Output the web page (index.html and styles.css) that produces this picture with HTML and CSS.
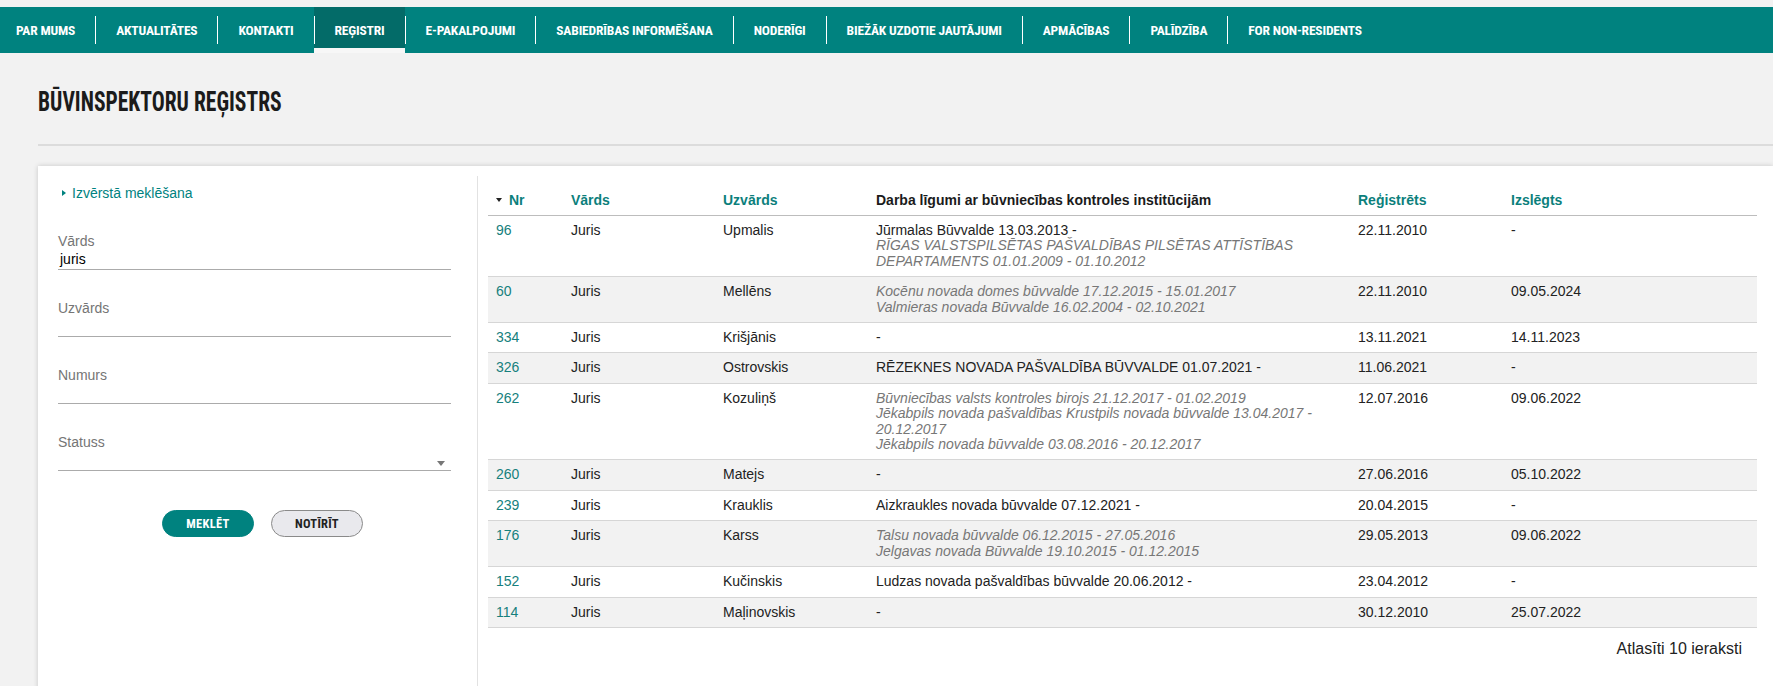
FILE: index.html
```html
<!DOCTYPE html>
<html lang="lv">
<head>
<meta charset="utf-8">
<title>Būvinspektoru reģistrs</title>
<link rel="stylesheet" href="styles.css">
</head>
<body>
<div class="topstrip"></div>
<nav class="mainnav">
  <ul class="navlist">
    <li class="navitem first"><a href="#">Par mums</a></li>
    <li class="navitem"><a href="#">Aktualitātes</a></li>
    <li class="navitem"><a href="#">Kontakti</a></li>
    <li class="navitem active"><a href="#">Reģistri</a></li>
    <li class="navitem"><a href="#">E-pakalpojumi</a></li>
    <li class="navitem"><a href="#">Sabiedrības informēšana</a></li>
    <li class="navitem"><a href="#">Noderīgi</a></li>
    <li class="navitem"><a href="#">Biežāk uzdotie jautājumi</a></li>
    <li class="navitem"><a href="#">Apmācības</a></li>
    <li class="navitem"><a href="#">Palīdzība</a></li>
    <li class="navitem"><a href="#">For non-residents</a></li>
  </ul>
</nav>

<main class="content">
  <h1 class="pagetitle">Būvinspektoru reģistrs</h1>
  <div class="rule"></div>

  <div class="card">
    <aside class="filters">
      <a class="advanced" href="#"><span class="tri-right"></span>Izvērstā meklēšana</a>

      <div class="field">
        <label class="flabel">Vārds</label>
        <div class="finput">juris</div>
      </div>
      <div class="field">
        <label class="flabel">Uzvārds</label>
        <div class="finput"></div>
      </div>
      <div class="field">
        <label class="flabel">Numurs</label>
        <div class="finput"></div>
      </div>
      <div class="field">
        <label class="flabel">Statuss</label>
        <div class="finput select"><span class="dd-arrow"></span></div>
      </div>

      <div class="buttons">
        <button class="btn primary">Meklēt</button>
        <button class="btn secondary">Notīrīt</button>
      </div>
    </aside>

    <section class="results">
      <table class="grid">
        <colgroup>
          <col class="c-nr"><col class="c-name"><col class="c-surname"><col class="c-contracts"><col class="c-reg"><col class="c-excl">
        </colgroup>
        <thead>
          <tr>
            <th class="sort"><span class="tri-down"></span>Nr</th>
            <th class="sort">Vārds</th>
            <th class="sort">Uzvārds</th>
            <th>Darba līgumi ar būvniecības kontroles institūcijām</th>
            <th class="sort">Reģistrēts</th>
            <th class="sort">Izslēgts</th>
          </tr>
        </thead>
        <tbody>
          <tr>
            <td class="nr">96</td><td>Juris</td><td>Upmalis</td>
            <td><div>Jūrmalas Būvvalde 13.03.2013 -</div><div class="past">RĪGAS VALSTSPILSĒTAS PAŠVALDĪBAS PILSĒTAS ATTĪSTĪBAS DEPARTAMENTS 01.01.2009 - 01.10.2012</div></td>
            <td>22.11.2010</td><td>-</td>
          </tr>
          <tr>
            <td class="nr">60</td><td>Juris</td><td>Mellēns</td>
            <td><div class="past">Kocēnu novada domes būvvalde 17.12.2015 - 15.01.2017</div><div class="past">Valmieras novada Būvvalde 16.02.2004 - 02.10.2021</div></td>
            <td>22.11.2010</td><td>09.05.2024</td>
          </tr>
          <tr>
            <td class="nr">334</td><td>Juris</td><td>Krišjānis</td>
            <td>-</td>
            <td>13.11.2021</td><td>14.11.2023</td>
          </tr>
          <tr>
            <td class="nr">326</td><td>Juris</td><td>Ostrovskis</td>
            <td>RĒZEKNES NOVADA PAŠVALDĪBA BŪVVALDE 01.07.2021 -</td>
            <td>11.06.2021</td><td>-</td>
          </tr>
          <tr>
            <td class="nr">262</td><td>Juris</td><td>Kozuliņš</td>
            <td><div class="past">Būvniecības valsts kontroles birojs 21.12.2017 - 01.02.2019</div><div class="past">Jēkabpils novada pašvaldības Krustpils novada būvvalde 13.04.2017 - 20.12.2017</div><div class="past">Jēkabpils novada būvvalde 03.08.2016 - 20.12.2017</div></td>
            <td>12.07.2016</td><td>09.06.2022</td>
          </tr>
          <tr>
            <td class="nr">260</td><td>Juris</td><td>Matejs</td>
            <td>-</td>
            <td>27.06.2016</td><td>05.10.2022</td>
          </tr>
          <tr>
            <td class="nr">239</td><td>Juris</td><td>Krauklis</td>
            <td>Aizkraukles novada būvvalde 07.12.2021 -</td>
            <td>20.04.2015</td><td>-</td>
          </tr>
          <tr>
            <td class="nr">176</td><td>Juris</td><td>Karss</td>
            <td><div class="past">Talsu novada būvvalde 06.12.2015 - 27.05.2016</div><div class="past">Jelgavas novada Būvvalde 19.10.2015 - 01.12.2015</div></td>
            <td>29.05.2013</td><td>09.06.2022</td>
          </tr>
          <tr>
            <td class="nr">152</td><td>Juris</td><td>Kučinskis</td>
            <td>Ludzas novada pašvaldības būvvalde 20.06.2012 -</td>
            <td>23.04.2012</td><td>-</td>
          </tr>
          <tr>
            <td class="nr">114</td><td>Juris</td><td>Maļinovskis</td>
            <td>-</td>
            <td>30.12.2010</td><td>25.07.2022</td>
          </tr>
        </tbody>
      </table>
      <div class="count">Atlasīti 10 ieraksti</div>
    </section>
  </div>
</main>
</body>
</html>
```

FILE: styles.css
```css
* { box-sizing: border-box; }

html, body {
  margin: 0;
  padding: 0;
}

body {
  background: #f2f2f2;
  font-family: "Liberation Sans", Arial, sans-serif;
  font-size: 14px;
  color: #222;
  overflow: hidden;
}

.topstrip {
  height: 7px;
}

/* ---------- navigation ---------- */
.mainnav {
  background: #00827f;
  height: 46px;
}

.navlist {
  list-style: none;
  margin: 0;
  padding: 0;
  display: flex;
  height: 100%;
}

.navitem {
  position: relative;
  flex: none;
  display: flex;
  align-items: center;
  padding: 0 20px 0 21px;
  height: 100%;
  white-space: nowrap;
}

.navitem.first {
  padding-left: 16px;
}

.navitem + .navitem::before {
  content: "";
  position: absolute;
  left: 0;
  top: 9px;
  width: 1px;
  height: 28px;
  background: #ffffff;
}

.navitem a {
  color: #ffffff;
  text-decoration: none;
  text-transform: uppercase;
  font-family: "Roboto Condensed", "Liberation Sans Narrow", "DejaVu Sans Condensed", "Open Sans", sans-serif;
  font-stretch: 75%;
  font-weight: 700;
  font-size: 13.5px;
  letter-spacing: -0.18px;
  line-height: 1;
  padding-top: 1px;
}

.navitem.active {
  background: #036b68;
  box-shadow: inset 0 -5px 0 #f7f7f7;
}

/* ---------- content ---------- */
.content {
  padding: 35px 0 0 38px;
}

.pagetitle {
  margin: 0;
  font-family: "Roboto Condensed", "Liberation Sans Narrow", "DejaVu Sans Condensed", "Open Sans", sans-serif;
  font-stretch: 75%;
  font-weight: 700;
  font-size: 28px;
  line-height: 28px;
  text-transform: uppercase;
  color: #1b1b1b;
  transform: scaleX(0.77);
  transform-origin: left center;
}

.rule {
  margin-top: 28px;
  height: 2px;
  background: #dcdcdc;
}

.card {
  margin-top: 20px;
  background: #ffffff;
  box-shadow: 0 0 5px rgba(0, 0, 0, 0.18);
  display: flex;
  min-height: 560px;
}

/* ---------- filters ---------- */
.filters {
  width: 439px;
  flex: none;
  padding: 19px 26px 0 20px;
}

.advanced {
  display: flex;
  align-items: center;
  padding-left: 4px;
  color: #00827f;
  text-decoration: none;
  font-size: 14px;
  line-height: 16px;
}

.tri-right {
  width: 0;
  height: 0;
  border-top: 3px solid transparent;
  border-bottom: 3px solid transparent;
  border-left: 4px solid #00827f;
  margin-right: 6px;
}

.field {
  margin-top: 32px;
}

.field + .field {
  margin-top: 30px;
}

.flabel {
  display: block;
  color: #757575;
  font-size: 14px;
  line-height: 16px;
}

.finput {
  position: relative;
  height: 21px;
  padding: 2px 2px 0 2px;
  font-size: 14px;
  line-height: 16px;
  color: #000;
  border-bottom: 1px solid #ababab;
}

.dd-arrow {
  position: absolute;
  right: 6px;
  bottom: 4px;
  width: 0;
  height: 0;
  border-left: 4px solid transparent;
  border-right: 4px solid transparent;
  border-top: 5px solid #777;
}

.buttons {
  display: flex;
  justify-content: center;
  gap: 17px;
  margin-top: 39px;
  padding-left: 16px;
}

.btn {
  width: 92px;
  height: 27px;
  border-radius: 14px;
  font-family: "Roboto Condensed", "Liberation Sans Narrow", "DejaVu Sans Condensed", "Open Sans", sans-serif;
  font-stretch: 75%;
  font-weight: 700;
  font-size: 12.5px;
  letter-spacing: 0.3px;
  text-transform: uppercase;
  padding: 0;
  cursor: pointer;
}

.btn.primary {
  background: #00827f;
  color: #ffffff;
  border: 1px solid #00827f;
}

.btn.secondary {
  background: #e9e9ed;
  color: #222;
  border: 1px solid #8a8a8a;
}

/* ---------- results ---------- */
.results {
  flex: 1;
  margin-top: 10px;
  padding: 9px 16px 0 10px;
  border-left: 1px solid #e2e2e2;
}

.grid {
  width: 1269px;
  border-collapse: collapse;
  table-layout: fixed;
}

.c-nr { width: 75px; }
.c-name { width: 152px; }
.c-surname { width: 153px; }
.c-contracts { width: 482px; }
.c-reg { width: 153px; }
.c-excl { width: 254px; }

.grid th {
  text-align: left;
  font-weight: 700;
  font-size: 14px;
  line-height: 16px;
  padding: 7px 8px 7px 8px;
  color: #1b1b1b;
  border-bottom: 1px solid #bdbdbd;
}

.grid th.sort {
  color: #0c7f7c;
}

.tri-down {
  display: inline-block;
  vertical-align: middle;
  width: 0;
  height: 0;
  border-left: 3px solid transparent;
  border-right: 3px solid transparent;
  border-top: 4px solid #222;
  margin: -2px 7px 0 0;
}

.grid td {
  vertical-align: top;
  font-size: 14px;
  line-height: 15.4px;
  padding: 7px 8px;
  color: #222;
  border-bottom: 1px solid #d6d6d6;
}

.grid tbody tr:nth-child(even) td {
  background: #f2f2f2;
}

.grid td.nr {
  color: #16807d;
}

.past {
  font-style: italic;
  color: #777777;
}

.count {
  width: 1269px;
  text-align: right;
  padding-right: 15px;
  margin-top: 12px;
  font-size: 16px;
  line-height: 18px;
  color: #222;
}
```
